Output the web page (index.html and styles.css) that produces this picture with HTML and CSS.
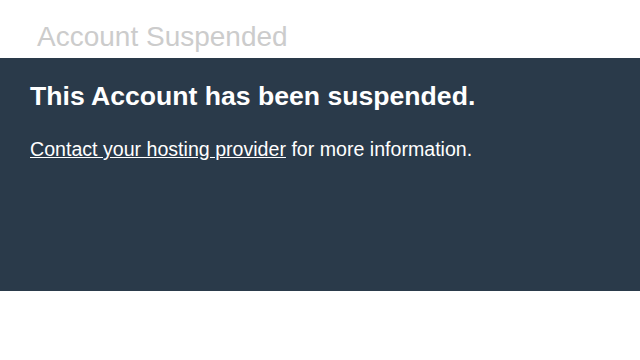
FILE: index.html
```html
<!DOCTYPE html>
<html>
<head>
<meta charset="utf-8">
<link rel="stylesheet" href="styles.css">
</head>
<body>
<header class="top"><h1 class="site-title">Account Suspended</h1></header>
<main class="band">
  <h2 class="headline">This Account has been suspended.</h2>
  <p class="info"><a class="link" href="#">Contact your hosting provider</a> for more information.</p>
</main>
</body>
</html>
```
FILE: styles.css
```css
html, body { margin: 0; padding: 0; background: #fff; }
body { font-family: "Liberation Sans", Arial, sans-serif; }
.top { height: 58px; padding-left: 37px; box-sizing: border-box; }
.site-title { margin: 0; padding-top: 19px; font-size: 28px; font-weight: normal; color: #cccccc; line-height: 36px; }
.band { background: #2a3a4a; height: 233px; padding: 22px 30px 0; box-sizing: border-box; color: #fff; }
.headline { margin: 0; font-size: 26.6px; font-weight: bold; line-height: 32px; }
.info { margin: 25px 0 0; font-size: 19.6px; line-height: 24px; }
.link { color: #fff; text-decoration: underline; }
```
